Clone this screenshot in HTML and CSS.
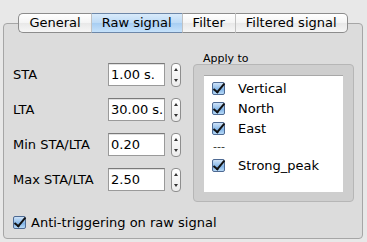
FILE: index.html
```html
<!DOCTYPE html>
<html lang="en">
<head>
    <meta charset="UTF-8">
    <title>Trigger settings</title>
    <link rel="stylesheet" href="styles.css">
</head>
<body>

    <div class="window">
        <div class="tabs">
            <div class="tab">General</div>
            <div class="tab selected">Raw signal</div>
            <div class="tab">Filter</div>
            <div class="tab">Filtered signal</div>
        </div>

        <div class="panel">
            <div class="main">
                <div class="params">
                    <div class="row">
                        <span class="label">STA</span>
                        <div class="field">1.00 s.</div>
                        <div class="stepper"><span class="up"></span><span class="down"></span></div>
                    </div>
                    <div class="row">
                        <span class="label">LTA</span>
                        <div class="field">30.00 s.</div>
                        <div class="stepper"><span class="up"></span><span class="down"></span></div>
                    </div>
                    <div class="row">
                        <span class="label">Min STA/LTA</span>
                        <div class="field">0.20</div>
                        <div class="stepper"><span class="up"></span><span class="down"></span></div>
                    </div>
                    <div class="row">
                        <span class="label">Max STA/LTA</span>
                        <div class="field">2.50</div>
                        <div class="stepper"><span class="up"></span><span class="down"></span></div>
                    </div>
                </div>

                <div class="apply">
                    <div class="group-title">Apply to</div>
                    <div class="group">
                        <div class="list">
                            <div class="item"><span class="check"></span>Vertical</div>
                            <div class="item"><span class="check"></span>North</div>
                            <div class="item"><span class="check"></span>East</div>
                            <div class="item sep">---</div>
                            <div class="item"><span class="check"></span>Strong_peak</div>
                        </div>
                    </div>
                </div>
            </div>

            <div class="bottom">
                <span class="check"></span>Anti-triggering on raw signal
            </div>
        </div>
    </div>

</body>
</html>
```

FILE: styles.css
```css
body {
    margin: 0;
    padding: 0;
    background-color: #e8e8e8;
    font-family: "DejaVu Sans", Verdana, sans-serif;
    font-size: 13px;
    color: #000;
}

.window {
    width: 367px;
    height: 242px;
    padding-top: 13px;
    box-sizing: border-box;
}

.tabs {
    display: flex;
    justify-content: center;
    margin-left: 3px;
    width: 360px;
    height: 20px;
    position: relative;
    z-index: 1;
}

.tab {
    height: 20px;
    box-sizing: border-box;
    padding: 0 10px;
    line-height: 18px;
    border: 1px solid #8c8c8c;
    border-left: 1px solid #c2c2c2;
    border-right: none;
    background: linear-gradient(#ffffff, #f4f4f4 50%, #e8e8e8 51%, #f6f6f6);
    white-space: nowrap;
}

.tab:first-child {
    border-left: 1px solid #8c8c8c;
    border-radius: 5px 0 0 5px;
}

.tab:last-child {
    border-right: 1px solid #8c8c8c;
    border-radius: 0 5px 5px 0;
}

.tab.selected {
    background: linear-gradient(#d9ebfb, #bcdaf6 50%, #a7cdf2 51%, #c6e2fb);
    border-top-color: #6d87a8;
    border-bottom-color: #6d87a8;
}

.panel {
    margin: -10px 0 0 3px;
    width: 360px;
    height: 216px;
    box-sizing: border-box;
    border: 1px solid #a6a6a6;
    border-radius: 4px;
    background-color: #dcdcdc;
    padding: 0 0 0 9px;
}

.main {
    display: flex;
}

.params {
    padding-top: 39px;
    display: flex;
    flex-direction: column;
    gap: 12px;
}

.row {
    display: flex;
    align-items: center;
    height: 23px;
}

.label {
    width: 95px;
    white-space: nowrap;
}

.field {
    width: 57px;
    height: 23px;
    box-sizing: border-box;
    background-color: #fff;
    border: 1px solid #9a9a9a;
    border-top-color: #7a7a7a;
    box-shadow: inset 0 1px 0 #e0e0e0;
    padding: 0 0 0 2px;
    line-height: 21px;
    font-size: 13px;
    white-space: nowrap;
    overflow: hidden;
}

.stepper {
    margin-left: 6px;
    width: 10px;
    height: 24px;
    box-sizing: border-box;
    border: 1px solid #8e8e8e;
    border-radius: 4px;
    background: linear-gradient(#ffffff, #ececec);
    display: flex;
    flex-direction: column;
    align-items: center;
    justify-content: space-between;
    padding: 4px 0;
}

.up, .down {
    width: 0;
    height: 0;
    border-left: 2px solid transparent;
    border-right: 2px solid transparent;
}

.up {
    border-bottom: 3px solid #333;
}

.down {
    border-top: 3px solid #333;
}

.apply {
    margin-left: 12px;
    padding-top: 28px;
}

.group-title {
    font-size: 11px;
    line-height: 13px;
    padding-left: 10px;
}

.group {
    margin-top: -1px;
    width: 161px;
    height: 138px;
    box-sizing: border-box;
    border: 1px solid #b6b6b6;
    border-radius: 4px;
    background-color: #cecece;
    padding: 10px 0 0 10px;
}

.list {
    width: 139px;
    height: 117px;
    box-sizing: border-box;
    background-color: #fff;
    border-top: 1px solid #a8a8a8;
    padding: 2px 0 0 8px;
}

.item {
    display: flex;
    align-items: center;
    height: 20px;
    font-size: 13px;
}

.item.sep {
    height: 17px;
    padding-left: 1px;
    font-size: 11px;
    color: #333;
}

.check {
    width: 13px;
    height: 13px;
    box-sizing: border-box;
    margin-right: 13px;
    border: 1px solid #4e6a93;
    border-radius: 2px;
    background: linear-gradient(#cfe3f8, #8fbdea 50%, #79aee5 51%, #b7d9f6);
    position: relative;
}

.check::after {
    content: "";
    position: absolute;
    left: 3px;
    top: -2px;
    width: 4px;
    height: 10px;
    border-right: 2px solid #111;
    border-bottom: 2px solid #111;
    transform: rotate(40deg);
}

.bottom {
    display: flex;
    align-items: center;
    margin-top: 12px;
    height: 17px;
}

.bottom .check {
    margin-right: 5px;
}
```
